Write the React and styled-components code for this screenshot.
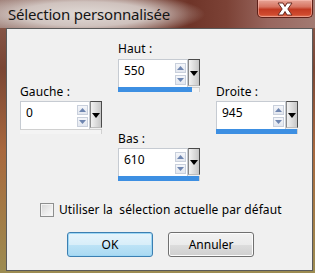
import React from "react";
import styled, { createGlobalStyle } from "styled-components";

const Global = createGlobalStyle`
  html, body { margin: 0; padding: 0; background: #ffffff; }
  body { font-family: "Noto Sans", "Open Sans", sans-serif; }
`;

const Window = styled.div`
  width: 315px;
  height: 273px;
  display: flex;
  flex-direction: column;
  background: linear-gradient(180deg, #8c5e52 0%, #7a4634 25%, #a8683e 55%, #a27c46 80%, #9c8c52 100%);
  overflow: hidden;
`;

const TitleBar = styled.div`
  height: 28px;
  display: flex;
  justify-content: space-between;
  align-items: flex-start;
  background:
    radial-gradient(ellipse 120px 22px at 85px 14px, rgba(226,220,216,0.98) 0%, rgba(214,204,200,0.9) 55%, rgba(160,110,100,0) 100%),
    linear-gradient(90deg, #9c7c74 0%, #8a5e54 40%, #6e3428 60%, #7c4236 72%, #98665e 85%, #a27a72 100%);
`;

const Title = styled.div`
  padding: 4px 0 0 8px;
  font-size: 15px;
  line-height: 20px;
  color: #141414;
  letter-spacing: -0.2px;
`;

const CloseButton = styled.div`
  width: 56px;
  height: 18px;
  margin-right: 2px;
  box-sizing: border-box;
  border: 1px solid #5e2018;
  border-top: none;
  border-radius: 0 0 5px 5px;
  background: linear-gradient(180deg, #e7a597 0%, #d77461 40%, #c23a22 55%, #cf4a2e 85%, #e0785a 100%);
  box-shadow: inset 0 0 0 1px rgba(255, 200, 190, 0.5);
  display: flex;
  align-items: center;
  justify-content: center;
`;

const Client = styled.div`
  margin: 0 2px 2px 6px;
  height: 243px;
  box-sizing: border-box;
  border: 1px solid #5a5a5a;
  background: #f0f0f0;
  display: flex;
  flex-direction: column;
  font-size: 12px;
  color: #000;
`;

const Fields = styled.div`
  display: flex;
  align-items: flex-start;
  padding: 12px 0 0 13px;
  gap: 16px;
`;

const Column = styled.div`
  display: flex;
  flex-direction: column;
  margin-top: ${(p) => p.$offset || 0}px;
  gap: ${(p) => p.$gap || 0}px;
`;

const Field = styled.div`
  display: flex;
  flex-direction: column;
  width: 82px;
`;

const Label = styled.div`
  line-height: 16px;
  height: 16px;
  margin-bottom: ${(p) => p.$gap}px;
  letter-spacing: 0.1px;
`;

const EditRow = styled.div`
  display: flex;
  align-items: flex-start;
  height: 28px;
`;

const TextBox = styled.div`
  width: 71px;
  height: 28px;
  box-sizing: border-box;
  border: 1px solid #c6cbd2;
  border-bottom: none;
  background: #ffffff;
  display: flex;
  justify-content: space-between;
  padding: 0 1px 0 5px;
`;

const Value = styled.div`
  line-height: 16px;
  padding-top: 3px;
`;

const SpinStack = styled.div`
  display: flex;
  flex-direction: column;
  gap: 2px;
  padding-top: 3px;
`;

const SpinButton = styled.div`
  width: 11px;
  height: 10px;
  box-sizing: border-box;
  border: 1px solid #c9d0dc;
  background: linear-gradient(180deg, #f4f6fa 0%, #e3e7ef 100%);
  display: flex;
  align-items: center;
  justify-content: center;
`;

const DropButton = styled.div`
  width: 12px;
  height: 27px;
  box-sizing: border-box;
  border: 1px solid #4a4a4a;
  border-left-color: #8a8a8a;
  border-bottom-color: #bdbdbd;
  background: linear-gradient(90deg, #f2f2f2 0%, #d8d8d8 60%, #c6c6c6 100%);
  display: flex;
  justify-content: center;
  padding-top: 11px;
`;

const Track = styled.div`
  height: 5px;
  display: flex;
  background: #f4f4f4;
  box-sizing: border-box;
  border-top: 1px solid #d0d0d0;
  border-right: 1px solid #d0d0d0;
`;

const Fill = styled.div`
  height: 5px;
  margin-top: -1px;
  background: #3d8fe2;
`;

const CheckRow = styled.label`
  display: flex;
  align-items: center;
  gap: 5px;
  padding: 20px 0 0 33px;
  white-space: pre;
  letter-spacing: 0.1px;
`;

const CheckBox = styled.span`
  width: 14px;
  height: 14px;
  box-sizing: border-box;
  border: 1px solid #8e8f8f;
  background: linear-gradient(135deg, #d6d6d6 0%, #eeeeee 60%, #fafafa 100%);
  box-shadow: inset 0 0 0 1px #f4f4f4;
`;

const ButtonRow = styled.div`
  display: flex;
  gap: 15px;
  padding: 14px 0 0 60px;
`;

const Button = styled.button`
  width: 86px;
  height: 25px;
  box-sizing: border-box;
  border-radius: 3px;
  font-family: inherit;
  font-size: 12px;
  color: #000;
  padding: 0;
  border: 1px solid ${(p) => (p.$primary ? "#3c7fb1" : "#707070")};
  background: ${(p) =>
    p.$primary
      ? "linear-gradient(180deg, #e6f4fc 0%, #d8eef9 50%, #bde3f6 51%, #a9d9f2 100%)"
      : "linear-gradient(180deg, #f2f2f2 0%, #ebebeb 50%, #dddddd 51%, #cfcfcf 100%)"};
  box-shadow: inset 0 0 0 1px ${(p) => (p.$primary ? "#9ed7f5" : "#fcfcfc")};
`;

const UpArrow = () => (
  <svg width="7" height="4" viewBox="0 0 7 4">
    <path d="M0 4 L3.5 0 L7 4 Z" fill="#6f86b0" />
  </svg>
);
const DownArrow = () => (
  <svg width="7" height="4" viewBox="0 0 7 4">
    <path d="M0 0 L7 0 L3.5 4 Z" fill="#6f86b0" />
  </svg>
);
const DropArrow = () => (
  <svg width="8" height="5" viewBox="0 0 8 5">
    <path d="M0 0 L8 0 L4 5 Z" fill="#000" />
  </svg>
);

const CloseX = () => (
  <svg width="20" height="14" viewBox="0 0 20 14">
    <path
      d="M3 1 L8 1 L10 4.5 L12 1 L17 1 L12.8 7 L17 13 L12 13 L10 9.5 L8 13 L3 13 L7.2 7 Z"
      fill="#ffffff"
      stroke="#6a2a20"
      strokeWidth="1"
      strokeLinejoin="round"
    />
  </svg>
);

const NumberField = ({ label, value, max, labelGap }) => (
  <Field>
    <Label $gap={labelGap}>{label}</Label>
    <EditRow>
      <TextBox>
        <Value>{value}</Value>
        <SpinStack>
          <SpinButton><UpArrow /></SpinButton>
          <SpinButton><DownArrow /></SpinButton>
        </SpinStack>
      </TextBox>
      <DropButton><DropArrow /></DropButton>
    </EditRow>
    <Track>
      <Fill style={{ width: `${Math.round((value / max) * 82)}px` }} />
    </Track>
  </Field>
);

export default function App() {
  return (
    <>
      <Global />
      <Window>
        <TitleBar>
          <Title>Sélection personnalisée</Title>
          <CloseButton><CloseX /></CloseButton>
        </TitleBar>
        <Client>
          <Fields>
            <Column $offset={43}>
              <NumberField label="Gauche :" value={0} max={945} labelGap={1} />
            </Column>
            <Column $gap={39}>
              <NumberField label="Haut :" value={550} max={610} labelGap={2} />
              <NumberField label="Bas :" value={610} max={610} labelGap={1} />
            </Column>
            <Column $offset={43}>
              <NumberField label="Droite :" value={945} max={945} labelGap={1} />
            </Column>
          </Fields>
          <CheckRow>
            <CheckBox />
            {"Utiliser la  sélection actuelle par défaut"}
          </CheckRow>
          <ButtonRow>
            <Button $primary>OK</Button>
            <Button>Annuler</Button>
          </ButtonRow>
        </Client>
      </Window>
    </>
  );
}
